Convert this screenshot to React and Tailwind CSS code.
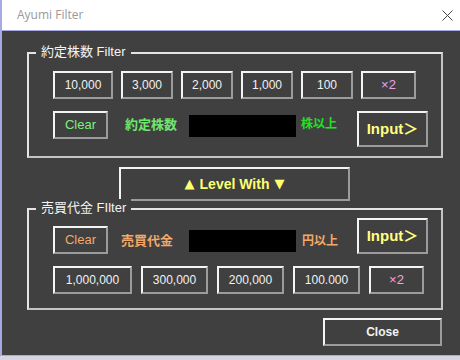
import React from "react";

const font = "font-['Liberation_Sans','Noto_Sans_CJK_JP',sans-serif]";
const raised =
  "flex items-center justify-center bg-[#404040] border-2 border-t-[#f4f4f4] border-l-[#f4f4f4] border-r-[#9c9c9c] border-b-[#9c9c9c]";

const Btn = ({ w, h = "h-[28px]", className = "", children }) => (
  <div className={`${raised} ${w} ${h} shrink-0 ${className}`}>{children}</div>
);

const GroupBox = ({ label, h, className = "", children }) => (
  <div
    className={`relative w-[416px] ${h} border-2 border-t-[#e4e4e4] border-l-[#e4e4e4] border-r-[#c4c4c4] border-b-[#c4c4c4] ${className}`}
  >
    <span className="absolute left-[7px] top-[-11px] bg-[#404040] px-[5px] text-[13px] leading-[18px] text-[#f4f4f4]">
      {label}
    </span>
    {children}
  </div>
);

const row1 = [
  { v: "10,000", w: "w-[60px]" },
  { v: "3,000", w: "w-[52px]" },
  { v: "2,000", w: "w-[52px]" },
  { v: "1,000", w: "w-[52px]" },
  { v: "100", w: "w-[52px]" },
];

const row2 = [
  { v: "1,000,000", w: "w-[79px]" },
  { v: "300,000", w: "w-[67px]" },
  { v: "200,000", w: "w-[67px]" },
  { v: "100.000", w: "w-[67px]" },
];

export default function App() {
  return (
    <div className={`flex h-[360px] w-[460px] flex-col overflow-hidden bg-white ${font}`}>
      {/* title bar */}
      <div className="flex h-[30px] shrink-0 items-center justify-between border-l-2 border-[#a9a9e2] pl-[15px] pr-[7px]">
        <span className="font-['Open_Sans',sans-serif] text-[12px] text-[#9a9a9a]">Ayumi Filter</span>
        <svg width="11" height="11" viewBox="0 0 11 11">
          <path d="M0.5 0.5 L10.5 10.5 M10.5 0.5 L0.5 10.5" stroke="#444" strokeWidth="1" />
        </svg>
      </div>

      {/* body */}
      <div className="flex h-[326px] shrink-0 flex-col border-l-2 border-t border-b border-[#a9a9e2] bg-[#404040] pl-[25px] pt-[21px]">
        <GroupBox label="約定株数 Filter" h="h-[106px]">
          <div className="flex gap-[8px] pl-[24px] pt-[17px]">
            {row1.map((b) => (
              <Btn key={b.v} w={b.w}>
                <span className="text-[12px] text-[#f2f2f2]">{b.v}</span>
              </Btn>
            ))}
            <Btn w="w-[55px]">
              <span className="text-[13px] text-[#f2a0e6]">×2</span>
            </Btn>
          </div>
          <div className="mt-[12px] flex items-start pl-[24px]">
            <Btn w="w-[55px]">
              <span className="text-[13px] text-[#7cf07c]">Clear</span>
            </Btn>
            <span className="ml-[17px] mt-[6px] text-[13px] font-bold leading-[16px] text-[#6ee66e]">約定株数</span>
            <div className="ml-[12px] mt-[4px] h-[22px] w-[107px] bg-black" />
            <span className="ml-[5px] mt-[5px] text-[12px] font-bold leading-[16px] text-[#22e022]">株以上</span>
            <Btn w="w-[71px]" h="h-[36px]" className="ml-[20px]">
              <span className="text-[15px] font-bold text-[#ffff80]">Input＞</span>
            </Btn>
          </div>
        </GroupBox>

        <Btn w="w-[231px]" h="h-[34px]" className="ml-[92px] mt-[9px]">
          <span className="font-['DejaVu_Sans',sans-serif] text-[13px] text-[#ffff70]">▲</span>
          <span className="ml-[5px] text-[14px] font-bold text-[#ffff70]">Level With</span>
          <span className="ml-[5px] font-['DejaVu_Sans',sans-serif] text-[13px] text-[#ffff70]">▼</span>
        </Btn>

        <GroupBox label="売買代金 FIlter" h="h-[102px]" className="mt-[7px]">
          <div className="flex items-start pl-[24px] pt-[8px]">
            <Btn w="w-[55px]" className="mt-[8px]">
              <span className="text-[13px] text-[#f2a868]">Clear</span>
            </Btn>
            <span className="ml-[13px] mt-[15px] text-[13px] font-bold leading-[16px] text-[#f2a868]">売買代金</span>
            <div className="ml-[16px] mt-[12px] h-[22px] w-[107px] bg-black" />
            <span className="ml-[6px] mt-[15px] text-[12px] font-bold leading-[16px] text-[#f2a868]">円以上</span>
            <Btn w="w-[71px]" h="h-[36px]" className="ml-[19px]">
              <span className="text-[15px] font-bold text-[#ffff80]">Input＞</span>
            </Btn>
          </div>
          <div className="mt-[12px] flex gap-[9px] pl-[24px]">
            {row2.map((b) => (
              <Btn key={b.v} w={b.w}>
                <span className="text-[12px] text-[#f2f2f2]">{b.v}</span>
              </Btn>
            ))}
            <Btn w="w-[55px]">
              <span className="text-[13px] text-[#f2a0e6]">×2</span>
            </Btn>
          </div>
        </GroupBox>

        <Btn w="w-[119px]" className="ml-[296px] mt-[8px]">
          <span className="text-[12px] font-bold text-[#f2f2f2]">Close</span>
        </Btn>
      </div>

      {/* strip of what lies behind the window */}
      <div className="flex-1 bg-[#d4d4e4]" />
    </div>
  );
}
